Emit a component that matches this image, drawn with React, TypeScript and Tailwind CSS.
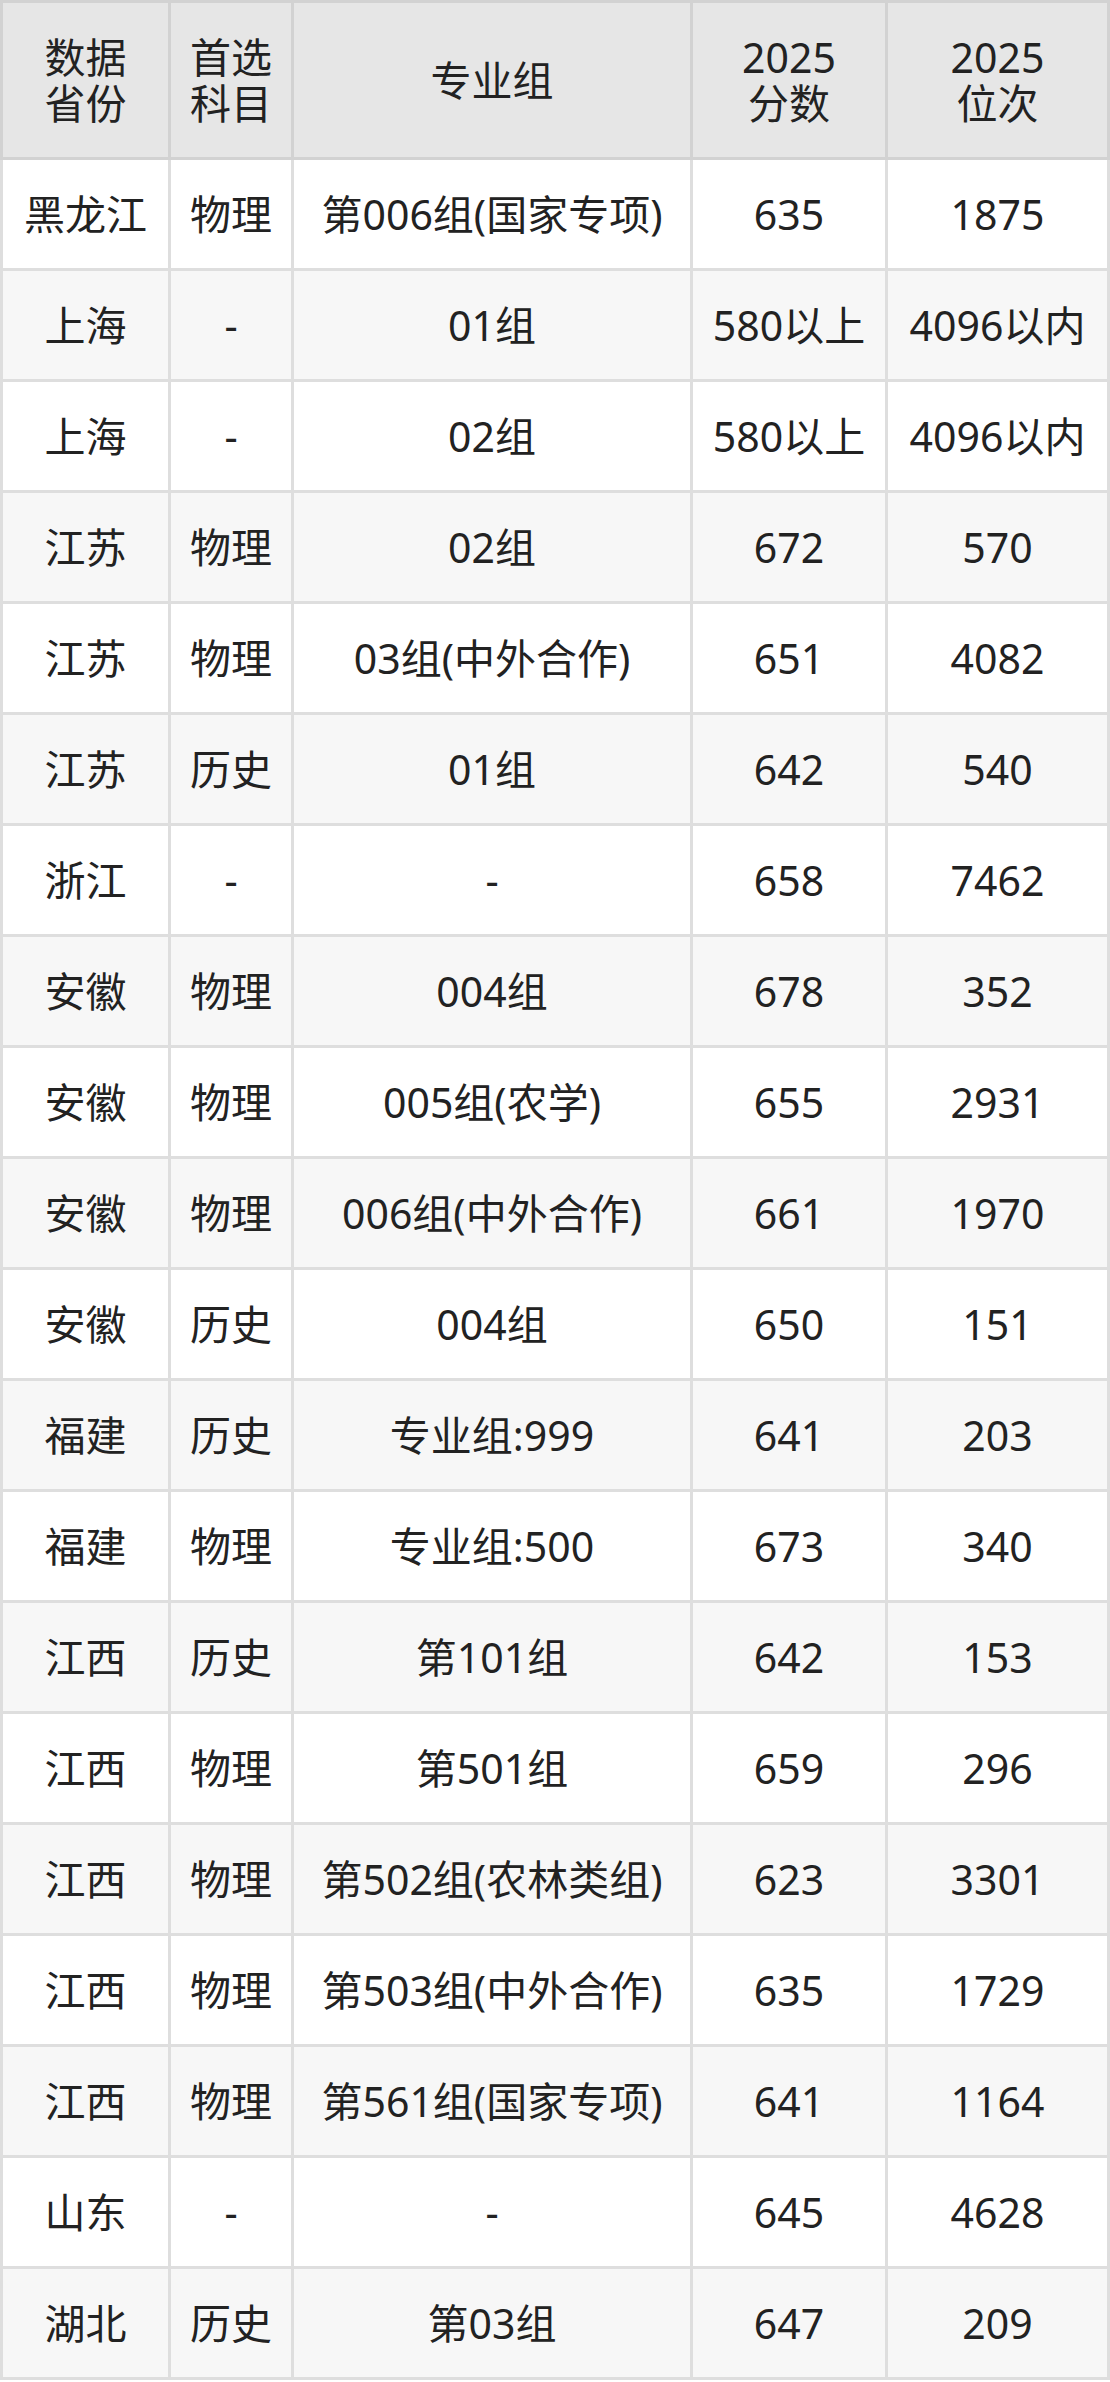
const header = [
  ['数据', '省份'],
  ['首选', '科目'],
  ['专业组'],
  ['2025', '分数'],
  ['2025', '位次'],
];

const rows: string[][] = [
  ['黑龙江', '物理', '第006组(国家专项)', '635', '1875'],
  ['上海', '-', '01组', '580以上', '4096以内'],
  ['上海', '-', '02组', '580以上', '4096以内'],
  ['江苏', '物理', '02组', '672', '570'],
  ['江苏', '物理', '03组(中外合作)', '651', '4082'],
  ['江苏', '历史', '01组', '642', '540'],
  ['浙江', '-', '-', '658', '7462'],
  ['安徽', '物理', '004组', '678', '352'],
  ['安徽', '物理', '005组(农学)', '655', '2931'],
  ['安徽', '物理', '006组(中外合作)', '661', '1970'],
  ['安徽', '历史', '004组', '650', '151'],
  ['福建', '历史', '专业组:999', '641', '203'],
  ['福建', '物理', '专业组:500', '673', '340'],
  ['江西', '历史', '第101组', '642', '153'],
  ['江西', '物理', '第501组', '659', '296'],
  ['江西', '物理', '第502组(农林类组)', '623', '3301'],
  ['江西', '物理', '第503组(中外合作)', '635', '1729'],
  ['江西', '物理', '第561组(国家专项)', '641', '1164'],
  ['山东', '-', '-', '645', '4628'],
  ['湖北', '历史', '第03组', '647', '209'],
];

const cols = 'grid grid-cols-[165px_120px_396px_192px_219px] gap-x-[3px]';

export default function App() {
  return (
    <div
      className="w-[1110px] text-[41px] leading-[46px] text-[#222]"
      style={{ fontFamily: '"Noto Sans", "Noto Sans CJK SC", sans-serif' }}
    >
      <div className={`${cols} bg-[#d2d2d2] p-[3px]`}>
        {header.map((lines, i) => (
          <div key={i} className="bg-[#e6e6e6] py-[31px] flex flex-col items-center justify-center text-center">
            {lines.map((line) => (
              <span key={line} className="block h-[46px]">{line}</span>
            ))}
          </div>
        ))}
      </div>
      <div className="flex flex-col gap-y-[3px] bg-[#dedede] px-[3px] pb-[3px]">
        {rows.map((row, r) => (
          <div key={r} className={cols}>
            {row.map((cell, c) => (
              <div
                key={c}
                className={`${r % 2 === 0 ? 'bg-white' : 'bg-[#f7f7f7]'} py-[31px] text-center whitespace-nowrap`}
              >
                {cell}
              </div>
            ))}
          </div>
        ))}
      </div>
    </div>
  );
}
